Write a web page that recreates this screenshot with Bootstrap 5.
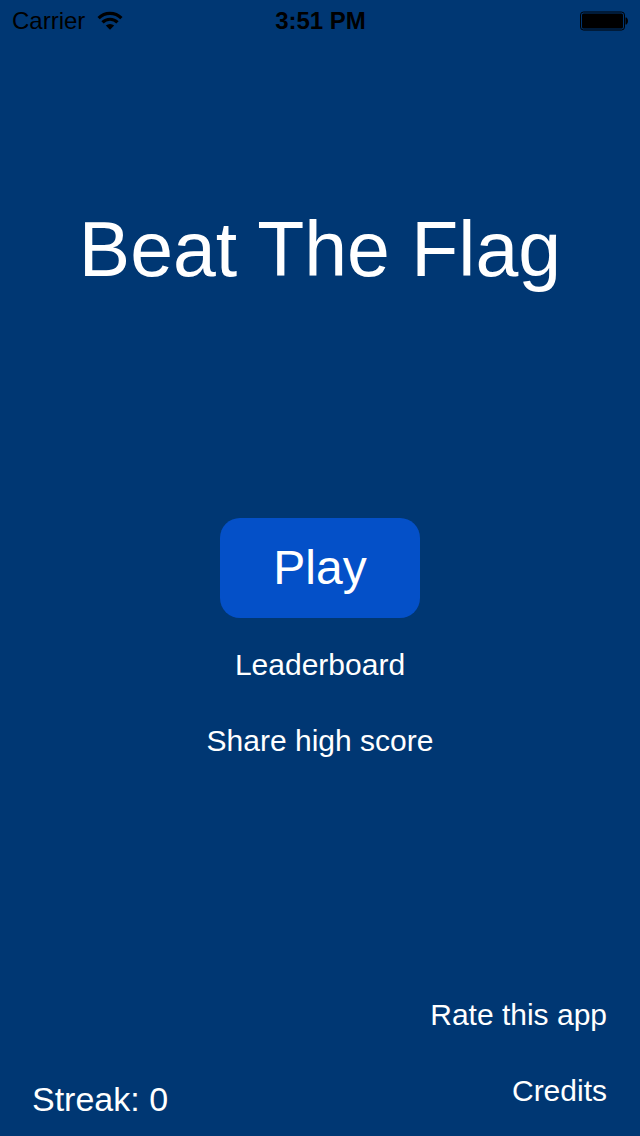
<!DOCTYPE html>
<html lang="en">
<head>
<meta charset="utf-8">
<meta name="viewport" content="width=device-width, initial-scale=1">
<title>Beat The Flag</title>
<link href="https://cdn.jsdelivr.net/npm/bootstrap@5.3.0/dist/css/bootstrap.min.css" rel="stylesheet">
<style>
body { background: #003773; color: #fff; font-family: "Liberation Sans", Arial, sans-serif; }
.status-bar { height: 42px; padding: 0 11px 0 12px; color: #000; font-size: 24px; line-height: 42px; }
.signal { gap: 12px; }
.game-title { margin-top: 159px; font-size: 77px; line-height: 96px; font-weight: 400; }
.menu { margin-top: 221px; }
.btn-play { width: 200px; height: 100px; border-radius: 20px; background: #0450c8; color: #fff; font-size: 48px; line-height: 60px; }
.btn-play:hover { background: #0a5ad8; color: #fff; }
.text-btn { padding: 0; border: 0; color: #fff; font-size: 30px; line-height: 36px; }
.text-btn:hover { color: #cde; }
.text-links { gap: 40px; }
.menu .text-links { margin-top: 29px; }
.page-foot { padding: 0 33px 17px 32px; }
.page-foot .text-links { padding-bottom: 10px; }
.streak { font-size: 34px; line-height: 40px; }
</style>
</head>
<body>
<div class="min-vh-100 d-flex flex-column">
  <header class="status-bar row g-0 align-items-center">
    <div class="col d-flex align-items-center signal">
      <span>Carrier</span>
      <svg width="26" height="20" viewBox="0 0 26 20" aria-hidden="true"><path d="M1.600 7.200a16 16 0 0 1 22.800 0M5.500 11.400a10.500 10.500 0 0 1 15 0" fill="none" stroke="#000" stroke-width="3.200"/><path d="M8.800 14.600a6 6 0 0 1 8.400 0L13 18.800z"/></svg>
    </div>
    <time class="col-auto fw-bold">3:51 PM</time>
    <div class="col d-flex justify-content-end">
      <svg width="50" height="20" viewBox="0 0 50 20" aria-hidden="true"><rect x="1.500" y="1" width="44" height="18" rx="3" fill="none" stroke="#000"/><rect x="3" y="2.500" width="41" height="15" rx="1.500"/><path d="M46.500 6.500h1q1.500 1 1.500 3.500t-1.500 3.500h-1z"/></svg>
    </div>
  </header>
  <main class="flex-grow-1 text-center">
    <h1 class="game-title mb-0">Beat The Flag</h1>
    <div class="menu d-flex flex-column align-items-center">
      <button type="button" class="btn btn-play border-0">Play</button>
      <div class="text-links d-flex flex-column align-items-center">
        <button type="button" class="btn text-btn">Leaderboard</button>
        <button type="button" class="btn text-btn">Share high score</button>
      </div>
    </div>
  </main>
  <footer class="page-foot d-flex justify-content-between align-items-end">
    <div class="streak">Streak: 0</div>
    <div class="text-links d-flex flex-column align-items-end">
      <button type="button" class="btn text-btn">Rate this app</button>
      <button type="button" class="btn text-btn">Credits</button>
    </div>
  </footer>
</div>
<script src="https://cdn.jsdelivr.net/npm/bootstrap@5.3.0/dist/js/bootstrap.bundle.min.js"></script>
</body>
</html>
